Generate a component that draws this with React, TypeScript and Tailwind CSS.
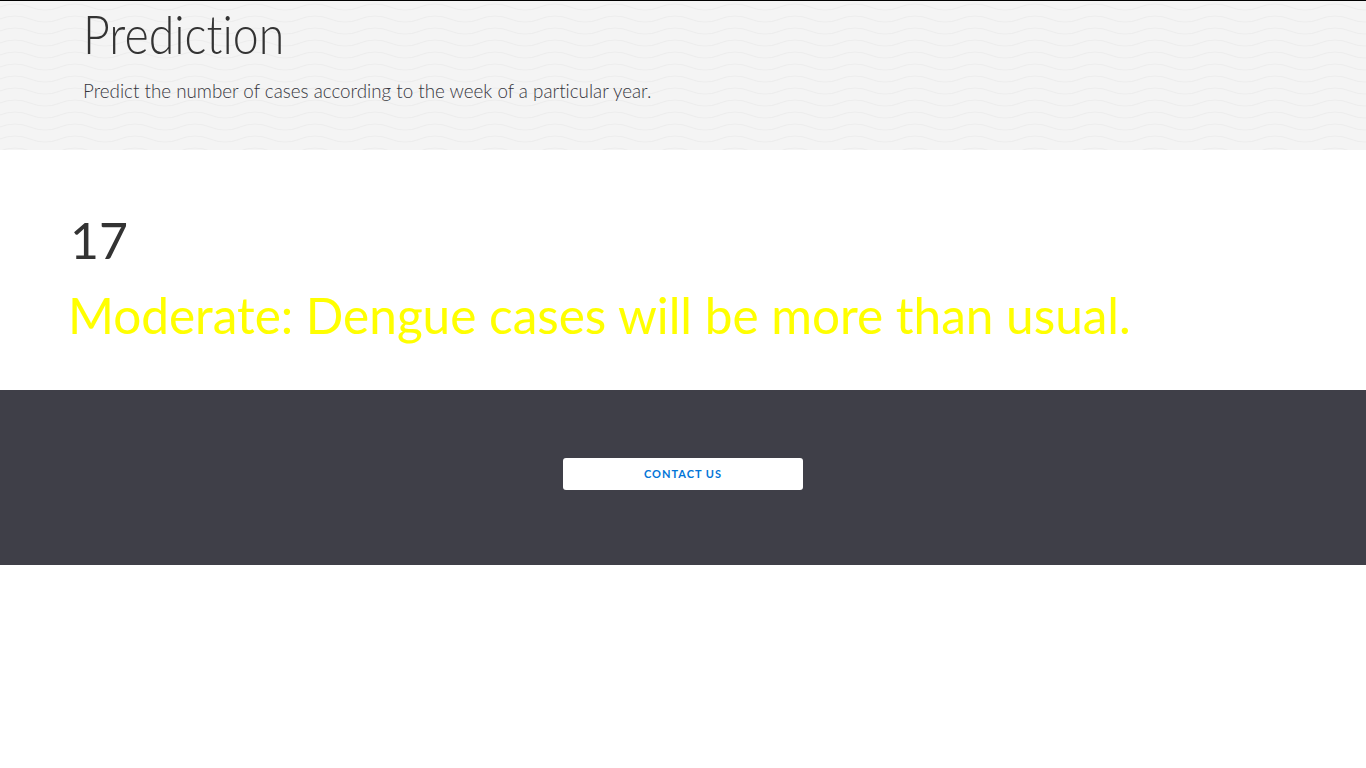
import React from "react";

const Waves = () => (
  <svg className="absolute inset-0 h-full w-full" aria-hidden="true">
    <defs>
      <pattern id="waves" width="60" height="12" patternUnits="userSpaceOnUse">
        <path
          d="M0 6 Q15 0 30 6 T60 6"
          fill="none"
          stroke="#ededed"
          strokeWidth="1.2"
        />
      </pattern>
    </defs>
    <rect width="100%" height="100%" fill="url(#waves)" />
  </svg>
);

const App = () => {
  return (
    <div className="min-h-screen bg-white font-['Lato',sans-serif] [font-variant-ligatures:none]">
      <header className="relative h-[150px] overflow-hidden border-t border-black bg-[#f4f4f4]">
        <Waves />
        <div className="relative pl-[83px]">
          <h1 className="w-fit origin-left scale-x-[0.86] text-[54px] font-light leading-[65px] text-[#333]">
            Prediction
          </h1>
          <p className="mt-[11px] text-[18.8px] font-light text-[#36363e]">
            Predict the number of cases according to the week of a particular year.
          </p>
        </div>
      </header>

      <section className="h-[240px] px-[68px] pt-[60px]">
        <p className="pl-[2px] text-[50px] leading-[60px] text-[#333]">17</p>
        <p className="mt-[14px] text-[49.5px] leading-[62px] text-[#ffff00]">
          Moderate: Dengue cases will be more than usual.
        </p>
      </section>

      <footer className="flex h-[175px] items-start justify-center bg-[#3f3f48] pt-[68px]">
        <button className="h-[32px] w-[240px] rounded-[3px] bg-white text-[11px] font-bold tracking-[1px] text-[#0275d8]">
          CONTACT US
        </button>
      </footer>
    </div>
  );
};

export default App;
